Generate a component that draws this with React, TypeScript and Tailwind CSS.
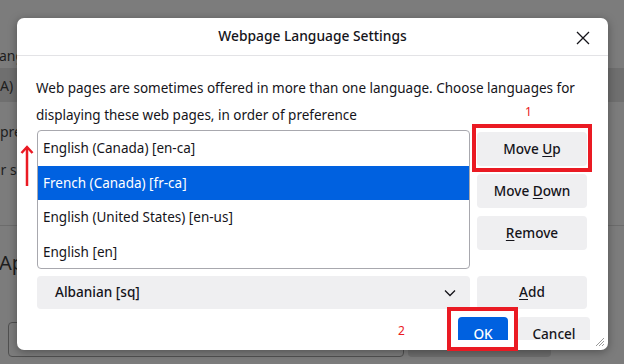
import React from "react";

const font = { fontFamily: '"Noto Sans", "Open Sans", sans-serif' };

function Btn({ children, className = "" }: { children: React.ReactNode; className?: string }) {
  return (
    <div
      className={`flex items-center justify-center rounded-[4px] bg-[#efeff1] text-[13.6px] font-medium text-[#15141a] ${className}`}
    >
      {children}
    </div>
  );
}

export default function App() {
  const items = [
    "English (Canada) [en-ca]",
    "French (Canada) [fr-ca]",
    "English (United States) [en-us]",
    "English [en]",
  ];
  return (
    <div className="relative h-[364px] w-[624px] overflow-hidden bg-[#7c7c7c] text-[#1b1b1b]" style={font}>
      {/* background page (dimmed) */}
      <div className="flex flex-col text-[14px] text-[#1e1e1e]">
        <div className="mt-[45px] h-[22px] leading-[22px] -ml-[1px]">ang</div>
        <div className="mt-[1px] flex h-[34px] items-center bg-[#6f6f6f]">A)</div>
        <div className="mt-[19px] h-[22px] leading-[22px]">pre</div>
        <div className="mt-[16px] h-[22px] leading-[22px] -ml-[3px]">ır s</div>
        <div className="mt-[44px] h-px bg-[#6c6c6c]" />
        <div className="mt-[24px] text-[20px] leading-[26px] -ml-[1px]">Ap</div>
        <div className="mt-[46px] flex gap-[4px]">
          <div className="ml-[8px] h-[35px] w-[396px] rounded-[4px] border border-[#505050]" />
          <div className="h-[35px] w-[143px] rounded-[4px] bg-[#6e6e6e]" />
        </div>
      </div>

      {/* dialog */}
      <div className="absolute left-[17px] top-[18px] h-[332px] w-[591px] overflow-hidden rounded-[7px] bg-white shadow-[0_2px_10px_rgba(0,0,0,0.35)]">
        <div className="relative flex h-[38px] items-center justify-center border-b border-[#e3e3e6]">
          <span className="text-[13.8px] font-medium text-[#15141a]">Webpage Language Settings</span>
          <svg className="absolute right-[18px] top-[13px]" width="14" height="14" viewBox="0 0 14 14">
            <path d="M1 1 L13 13 M13 1 L1 13" stroke="#15141a" strokeWidth="1.3" />
          </svg>
        </div>
        <div className="h-[284px] overflow-hidden pl-[19px]">
          <p className="mt-[19px] text-[13.5px] leading-[27px] text-[#15141a]">
            Web pages are sometimes offered in more than one language. Choose languages for
            <br />
            displaying these web pages, in order of preference
          </p>
          <div className="mt-[1px] grid grid-cols-[433px_110px] gap-x-[7px] pl-[1px]">
            <div className="h-[139px] overflow-hidden rounded-[4px] border border-[#a8a8ae]">
              {items.map((t, i) => (
                <div
                  key={t}
                  className={`flex h-[34.5px] items-center pl-[5px] text-[13.5px] ${
                    i === 1 ? "bg-[#0061e0] text-white" : "text-[#15141a]"
                  }`}
                >
                  {t}
                </div>
              ))}
            </div>
            <div className="flex flex-col gap-[8px] pt-[2px]">
              <Btn className="h-[34px]">
                Move&nbsp;<span className="underline underline-offset-2">U</span>p
              </Btn>
              <Btn className="h-[34px]">
                Move&nbsp;<span className="underline underline-offset-2">D</span>own
              </Btn>
              <Btn className="h-[34px]">
                <span className="underline underline-offset-2">R</span>emove
              </Btn>
            </div>
            <div className="mt-[7px] flex h-[33px] items-center justify-between rounded-[4px] bg-[#efeff1] pl-[18px] pr-[14px]">
              <span className="text-[13.6px] font-medium text-[#15141a]">Albanian [sq]</span>
              <svg width="12" height="8" viewBox="0 0 12 8">
                <path d="M1 1.5 L6 6.5 L11 1.5" fill="none" stroke="#15141a" strokeWidth="1.3" />
              </svg>
            </div>
            <Btn className="mt-[7px] h-[33px]">
              <span className="underline underline-offset-2">A</span>dd
            </Btn>
          </div>
          <div className="mt-[8px] flex h-[23px] items-start overflow-hidden pl-[422px]">
            <div className="flex h-[34px] w-[50px] items-center justify-center rounded-[4px] bg-[#0061e0] text-[13.6px] font-medium text-white">
              OK
            </div>
            <div className="ml-[10px] flex h-[34px] w-[72px] items-center justify-center rounded-[4px] bg-[#efeff1] text-[13.6px] font-medium text-[#15141a]">
              Cancel
            </div>
          </div>
        </div>
        <svg className="absolute bottom-[3px] right-[3px]" width="12" height="12" viewBox="0 0 12 12">
          <path d="M11 3 L3 11 M11 6 L6 11 M11 9 L9 11" stroke="#9a9a9a" strokeWidth="1" />
        </svg>
      </div>

      {/* annotations */}
      <div className="absolute left-[472px] top-[124px] h-[48px] w-[120px] border-[4px] border-[#ea1a23]" />
      <div className="absolute left-[447px] top-[307px] h-[44px] w-[71px] border-[4px] border-[#ea1a23]" />
      <div className="absolute left-[525px] top-[104px] text-[12px] leading-[16px] text-[#ea1a23]">1</div>
      <div className="absolute left-[398px] top-[323px] text-[12px] leading-[16px] text-[#ea1a23]">2</div>
      <svg className="absolute left-[20px] top-[145px]" width="14" height="42" viewBox="0 0 14 42">
        <path d="M7 2 L7 41" stroke="#ea1a23" strokeWidth="2.5" />
        <path d="M1.5 8 L7 2 L12.5 8" fill="none" stroke="#ea1a23" strokeWidth="2.5" />
      </svg>
    </div>
  );
}
